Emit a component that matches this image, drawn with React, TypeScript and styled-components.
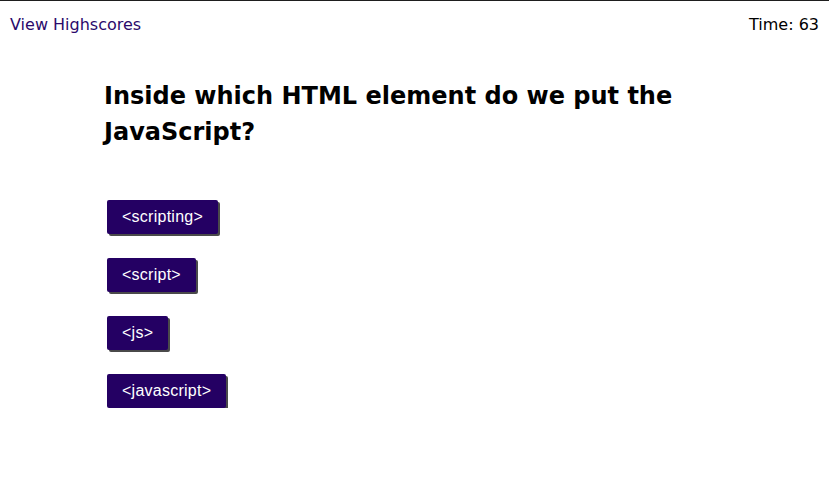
import React from 'react';
import styled, { createGlobalStyle } from 'styled-components';

const GlobalStyle = createGlobalStyle`
  html, body {
    margin: 0;
    padding: 0;
    background: #fff;
  }
  body {
    border-top: 1px solid #1e1e1e;
    font-family: "DejaVu Sans", Verdana, sans-serif;
  }
`;

const choices = ['<scripting>', '<script>', '<js>', '<javascript>'];

const App: React.FC = () => {
  return (
    <>
      <GlobalStyle />
      <Header>
        <HighscoreLink href="#">View Highscores</HighscoreLink>
        <Timer>Time: 63</Timer>
      </Header>
      <Main>
        <Question>Inside which HTML element do we put the JavaScript?</Question>
        <ChoiceList>
          {choices.map(choice => (
            <ChoiceButton key={choice}>{choice}</ChoiceButton>
          ))}
        </ChoiceList>
      </Main>
    </>
  );
};

export default App;

const Header = styled.header`
  display: flex;
  justify-content: space-between;
  align-items: center;
  padding: 14px 10px 0 10px;
  font-size: 16px;
  line-height: 20px;
`;

const HighscoreLink = styled.a`
  color: #2b0a6b;
  text-decoration: none;
`;

const Timer = styled.span`
  color: #000;
`;

const Main = styled.main`
  padding: 43px 0 0 104px;
  width: 640px;
`;

const Question = styled.h2`
  margin: 0;
  font-size: 24px;
  line-height: 36px;
  font-weight: bold;
  color: #000;
`;

const ChoiceList = styled.div`
  display: flex;
  flex-direction: column;
  align-items: flex-start;
  gap: 24px;
  margin-top: 50px;
  padding-left: 3px;
`;

const ChoiceButton = styled.button`
  height: 34px;
  padding: 0 15px;
  background: #240063;
  color: #fff;
  border: none;
  border-radius: 2px;
  box-shadow: 2px 2px 0 #4a4a4a;
  font-family: "Liberation Sans", Arial, sans-serif;
  font-size: 16px;
  letter-spacing: 0.25px;
  cursor: pointer;
`;
